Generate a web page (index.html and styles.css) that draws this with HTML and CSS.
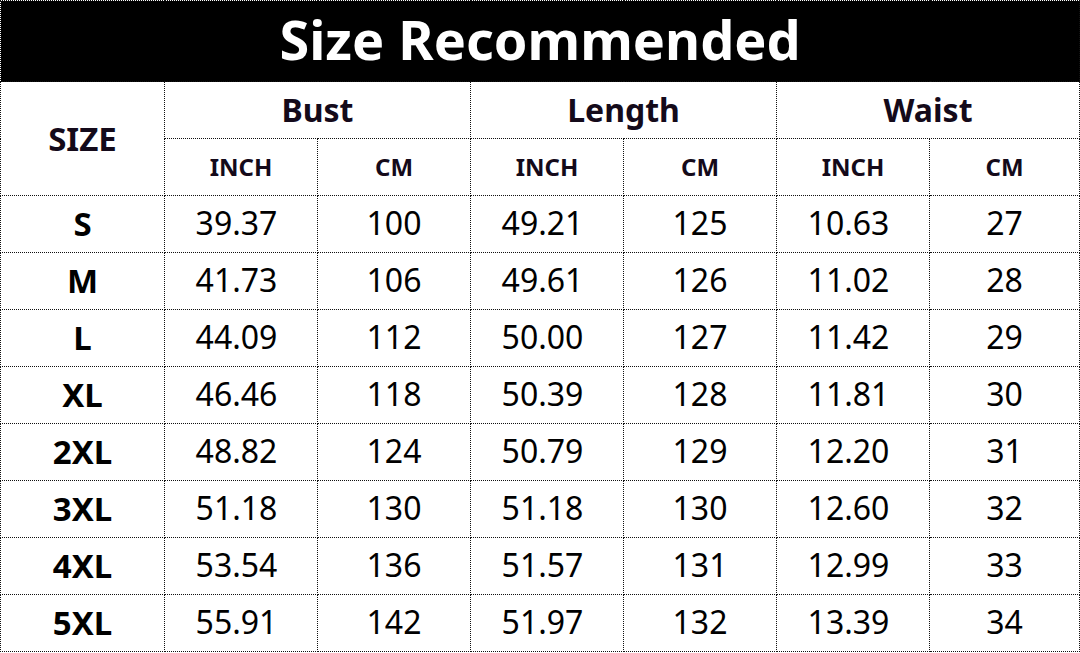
FILE: index.html
```html
<!DOCTYPE html>
<html>
<head>
<meta charset="utf-8">
<link rel="stylesheet" href="styles.css">
</head>
<body>
<table class="chart">
  <colgroup>
    <col class="c-size"><col class="c"><col class="c"><col class="c"><col class="c"><col class="c"><col class="c-last">
  </colgroup>
  <tr class="title-row"><th colspan="7" class="title">Size Recommended</th></tr>
  <tr class="group-row">
    <th rowspan="2" class="size-head">SIZE</th>
    <th colspan="2" class="group">Bust</th>
    <th colspan="2" class="group">Length</th>
    <th colspan="2" class="group">Waist</th>
  </tr>
  <tr class="unit-row">
    <th class="unit">INCH</th><th class="unit">CM</th>
    <th class="unit">INCH</th><th class="unit">CM</th>
    <th class="unit">INCH</th><th class="unit">CM</th>
  </tr>
  <tr><th class="sz">S</th><td class="in">39.37</td><td>100</td><td class="in">49.21</td><td>125</td><td class="in">10.63</td><td>27</td></tr>
  <tr><th class="sz">M</th><td class="in">41.73</td><td>106</td><td class="in">49.61</td><td>126</td><td class="in">11.02</td><td>28</td></tr>
  <tr><th class="sz">L</th><td class="in">44.09</td><td>112</td><td class="in">50.00</td><td>127</td><td class="in">11.42</td><td>29</td></tr>
  <tr><th class="sz">XL</th><td class="in">46.46</td><td>118</td><td class="in">50.39</td><td>128</td><td class="in">11.81</td><td>30</td></tr>
  <tr><th class="sz">2XL</th><td class="in">48.82</td><td>124</td><td class="in">50.79</td><td>129</td><td class="in">12.20</td><td>31</td></tr>
  <tr><th class="sz">3XL</th><td class="in">51.18</td><td>130</td><td class="in">51.18</td><td>130</td><td class="in">12.60</td><td>32</td></tr>
  <tr><th class="sz">4XL</th><td class="in">53.54</td><td>136</td><td class="in">51.57</td><td>131</td><td class="in">12.99</td><td>33</td></tr>
  <tr><th class="sz">5XL</th><td class="in">55.91</td><td>142</td><td class="in">51.97</td><td>132</td><td class="in">13.39</td><td>34</td></tr>
</table>
</body>
</html>
```
FILE: styles.css
```css
html, body {
  margin: 0;
  padding: 0;
  background: #fff;
}
.chart {
  border-collapse: collapse;
  table-layout: fixed;
  width: 1079px;
  font-family: "Noto Sans", "Open Sans", sans-serif;
  color: #000;
}
.c-size { width: 164px; }
.c { width: 153px; }
.c-last { width: 150px; }
.chart tr { height: 57px; }
.chart tr.title-row { height: 81px; }
.chart th, .chart td {
  border: 1px dotted #111;
  padding: 0;
  text-align: center;
  vertical-align: middle;
  line-height: 1.2;
}
.chart td {
  font-size: 32px;
  font-weight: 400;
  padding-bottom: 2px;
}
.chart td.in {
  padding-right: 9px;
}
.title-row .title {
  background: #000;
  color: #fff;
  font-size: 54px;
  font-weight: 700;
  line-height: 1;
  padding-bottom: 4px;
}
.group {
  font-size: 32px;
  font-weight: 700;
  color: #140a1a;
  padding-bottom: 4px;
}
.size-head {
  font-size: 33px;
  font-weight: 700;
  color: #140a1a;
  padding-bottom: 3px;
}
.unit {
  font-size: 24px;
  font-weight: 700;
  color: #140a1a;
}
.sz {
  font-size: 33px;
  font-weight: 700;
  padding-bottom: 2px;
}
```
